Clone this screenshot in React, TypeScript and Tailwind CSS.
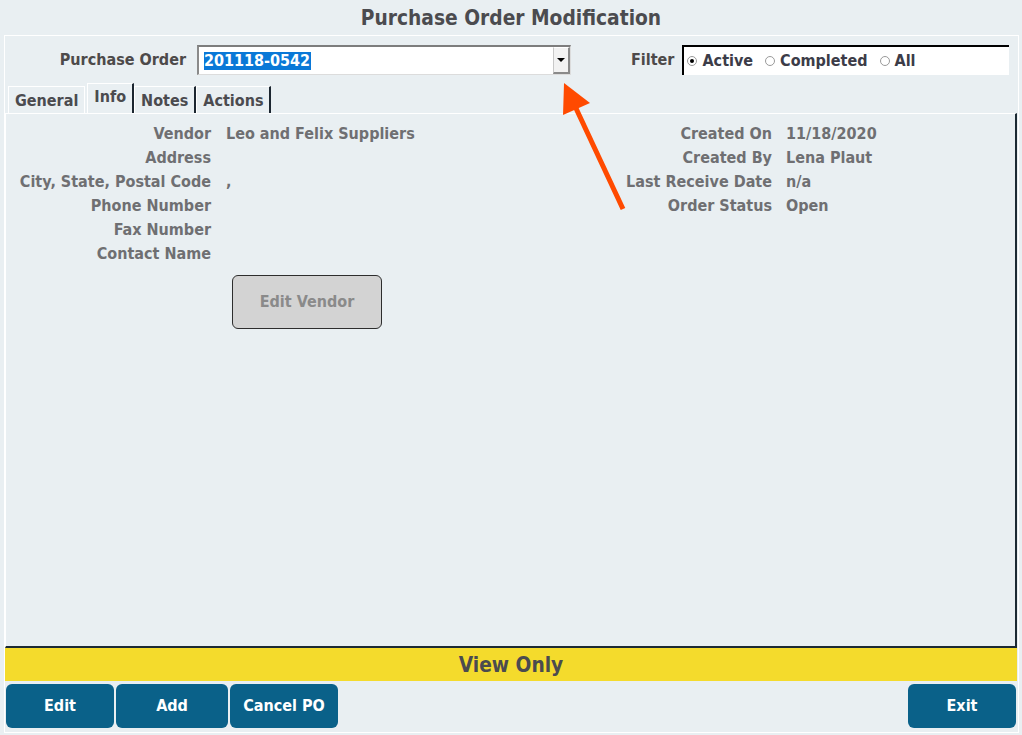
import React from "react";

const font = { fontFamily: '"DejaVu Sans Condensed", "Liberation Sans", sans-serif' };

function Radio({ label, checked }: { label: string; checked?: boolean }) {
  return (
    <div className="flex items-center gap-[5px]">
      <span className="flex h-[10px] w-[10px] items-center justify-center rounded-full border border-[#9a9a9a] bg-white">
        {checked && <span className="h-[4px] w-[4px] rounded-full bg-black" />}
      </span>
      <span className="text-[#3c3c48]">{label}</span>
    </div>
  );
}

function Field({ label, value }: { label: string; value?: string }) {
  return (
    <>
      <div className="text-right leading-[24px]">{label}</div>
      <div className="leading-[24px]">{value ?? ""}</div>
    </>
  );
}

export default function App() {
  const tabs = ["General", "Info", "Notes", "Actions"];
  const active = "Info";

  return (
    <div style={font} className="relative h-[735px] w-[1022px] overflow-hidden bg-[#e9eff2] text-[16px] font-bold">
      <div className="flex h-[35px] items-center justify-center pt-[2px] text-[20.75px] text-[#4b4b4f]">
        Purchase Order Modification
      </div>

      <div className="ml-[4px] flex h-[698px] w-[1015px] flex-col border border-white pr-[1px]">
        {/* Purchase order selector */}
        <div className="flex h-[47px] items-start pt-[9px]">
          <div className="flex h-[30px] w-[181px] items-center justify-end text-[#4d4a4a]">Purchase Order</div>
          <div className="ml-[11px] flex h-[30px] w-[374px] border-t-2 border-l-2 border-b border-r border-t-[#7d7d7d] border-l-[#8a8a8a] border-b-[#dcdcdc] border-r-[#dcdcdc] bg-white">
            <div className="flex flex-1 items-center pl-[5px]">
              <span className="bg-[#0a78d7] pr-[1px] leading-[18px] text-white">201118-0542</span>
            </div>
            <div className="flex w-[17px] items-center justify-center border-l border-t border-r-2 border-b-2 border-l-[#c8c8c8] border-t-white border-r-[#8a8a8a] border-b-[#8a8a8a] bg-[#f2f2f2]">
              <span className="h-0 w-0 border-x-[4px] border-t-[4px] border-x-transparent border-t-black" />
            </div>
          </div>
          <div className="ml-[60px] flex h-[30px] items-center text-[#4d4a4a]">Filter</div>
          <div className="ml-[8px] flex h-[30px] w-[327px] items-center gap-[12px] border-t-2 border-l-2 border-black bg-white pl-[3px]">
            <Radio label="Active" checked />
            <Radio label="Completed" />
            <Radio label="All" />
          </div>
        </div>

        {/* Tabs */}
        <div className="flex h-[30px] items-end pl-[3px]">
          {tabs.map((tab) => (
            <div
              key={tab}
              className={`flex items-center border-t border-l border-white px-[6px] pt-[1px] text-[#4b4b4f] ${
                tab === active ? "h-[30px] pb-[4px]" : "h-[27px]"
              } ${tab === "General" ? "mr-[2px] border-r border-r-white" : "border-r-2 border-r-[#1c2630]"}`}
            >
              {tab}
            </div>
          ))}
        </div>

        {/* Info panel */}
        <div className="flex h-[535px] border-t border-l border-white border-r-2 border-b-2 border-r-[#1c2a33] border-b-[#1c2a33] pt-[8px] text-[#6f6f72]">
          <div className="w-[594px]">
            <div className="grid grid-cols-[205px_auto] gap-x-[15px]">
              <Field label="Vendor" value="Leo and Felix Suppliers" />
              <Field label="Address" />
              <Field label="City, State, Postal Code" value="," />
              <Field label="Phone Number" />
              <Field label="Fax Number" />
              <Field label="Contact Name" />
            </div>
            <button className="ml-[226px] mt-[9px] h-[54px] w-[150px] rounded-[6px] border border-[#2d2d2d] bg-[#d3d3d3] text-[#8a8a8a]">
              Edit Vendor
            </button>
          </div>
          <div className="grid h-fit grid-cols-[172px_auto] gap-x-[14px]">
            <Field label="Created On" value="11/18/2020" />
            <Field label="Created By" value="Lena Plaut" />
            <Field label="Last Receive Date" value="n/a" />
            <Field label="Order Status" value="Open" />
          </div>
        </div>

        {/* Status bar */}
        <div className="flex h-[33px] items-center justify-center bg-[#f4db2c] pt-[3px] text-[20.75px] text-[#4b4b4f]">View Only</div>

        {/* Actions */}
        <div className="flex gap-[2px] pl-[1px] pr-[1px] pt-[3px]">
          {[
            ["Edit", "w-[108px]"],
            ["Add", "w-[112px]"],
            ["Cancel PO", "w-[108px]"],
          ].map(([label, w]) => (
            <button key={label} className={`h-[44px] ${w} rounded-[6px] bg-[#0a6189] text-white`}>
              {label}
            </button>
          ))}
          <button className="ml-auto h-[44px] w-[108px] rounded-[6px] bg-[#0a6189] text-white">Exit</button>
        </div>
      </div>

      {/* Annotation arrow */}
      <svg className="pointer-events-none absolute left-0 top-0" width="1022" height="735">
        <line x1="623" y1="209" x2="574" y2="104" stroke="#ff4a00" strokeWidth="5" />
        <polygon points="564,83 563,115 590,103" fill="#ff4a00" />
      </svg>
    </div>
  );
}
